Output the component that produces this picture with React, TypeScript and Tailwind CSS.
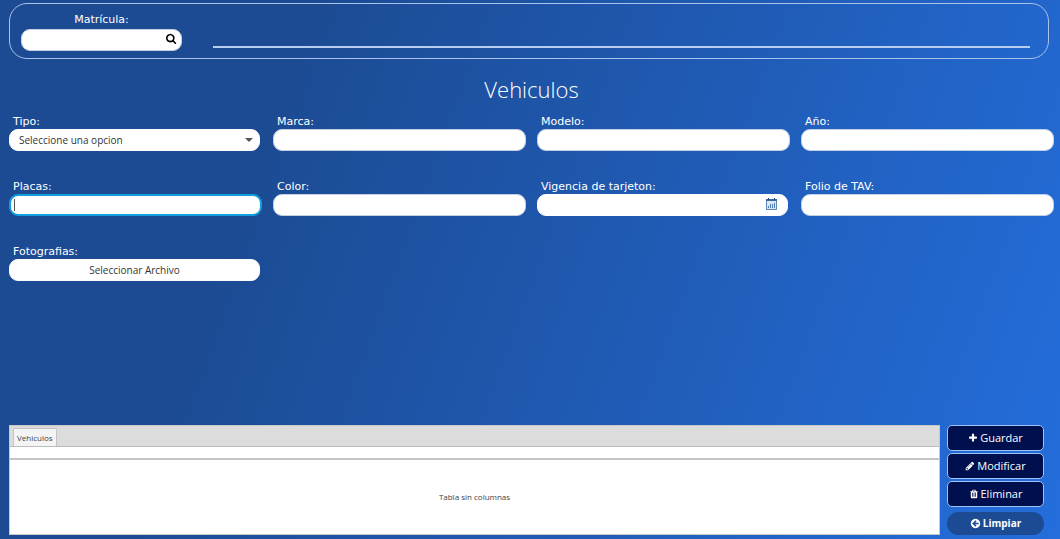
import React from "react";

const ICONS = {
  search:
    "M1152 832q0-185-131.5-316.5t-316.5-131.5-316.5 131.5-131.5 316.5 131.5 316.5 316.5 131.5 316.5-131.5 131.5-316.5zm512 832q0 52-38 90t-90 38q-54 0-90-38l-343-342q-179 124-399 124-143 0-273.5-55.5t-225-150-150-225-55.5-273.5 55.5-273.5 150-225 225-150 273.5-55.5 273.5 55.5 225 150 150 225 55.5 273.5q0 220-124 399l343 343q37 37 37 90z",
  plus: "M1600 736v192q0 40-28 68t-68 28h-416v416q0 40-28 68t-68 28h-192q-40 0-68-28t-28-68v-416h-416q-40 0-68-28t-28-68v-192q0-40 28-68t68-28h416v-416q0-40 28-68t68-28h192q40 0 68 28t28 68v416h416q40 0 68 28t28 68z",
  pencil:
    "M491 1536l91-91-235-235-91 91v107h128v128h107zm523-928q0-22-22-22-10 0-17 7l-542 542q-7 7-7 17 0 22 22 22 10 0 17-7l542-542q7-7 7-17zm-54-192l416 416-832 832h-416v-416zm683 96q0 53-37 90l-166 166-416-416 166-165q36-38 90-38 53 0 91 38l235 234q37 39 37 91z",
  trash:
    "M704 1376v-704q0-14-9-23t-23-9h-64q-14 0-23 9t-9 23v704q0 14 9 23t23 9h64q14 0 23-9t9-23zm256 0v-704q0-14-9-23t-23-9h-64q-14 0-23 9t-9 23v704q0 14 9 23t23 9h64q14 0 23-9t9-23zm256 0v-704q0-14-9-23t-23-9h-64q-14 0-23 9t-9 23v704q0 14 9 23t23 9h64q14 0 23-9t9-23zm-544-992h448l-48-117q-7-9-17-11h-317q-10 2-17 11zm928 32v64q0 14-9 23t-23 9h-96v948q0 83-47 143.5t-113 60.5h-832q-66 0-113-58.5t-47-141.5v-952h-96q-14 0-23-9t-9-23v-64q0-14 9-23t23-9h309l70-167q15-37 54-63t79-26h320q40 0 79 26t54 63l70 167h309q14 0 23 9t9 23z",
  back: "M1408 960v-128q0-26-19-45t-45-19h-502l189-189q19-19 19-45t-19-45l-91-91q-18-18-45-18t-45 18l-362 362-91 91q-18 18-18 45t18 45l91 91 362 362q18 18 45 18t45-18l91-91q18-18 18-45t-18-45l-189-189h502q26 0 45-19t19-45zm256-64q0 209-103 385.5t-279.5 279.5-385.5 103-385.5-103-279.5-279.5-103-385.5 103-385.5 279.5-279.5 385.5-103 385.5 103 279.5 279.5 103 385.5z",
};

function Icon({ name, className }: { name: keyof typeof ICONS; className: string }) {
  return (
    <svg viewBox="0 0 1792 1792" className={className} fill="currentColor" aria-hidden="true">
      <path d={ICONS[name]} />
    </svg>
  );
}

function CalendarIcon() {
  return (
    <svg viewBox="0 0 11 12" className="h-3 w-[11px]" fill="none" aria-hidden="true">
      <path d="M0 1h11v11H0z" fill="#dbe6f1" />
      <path d="M0 1h11v2H0z" fill="#3a6ba5" />
      <path d="M2.500 0v2M8.500 0v2" stroke="#24507f" />
      <path d="M.5 3v8.500h10V3" stroke="#5c87b6" />
      <path d="M2.500 10V8M4.500 10V6M6.500 10V6M8.500 10V5" stroke="#4f7fb3" />
    </svg>
  );
}

const control = "block h-[22px] w-full rounded-[9px] border bg-white px-1.5 text-[10px] text-[#333] outline-none";

function Field({ id, label, children }: { id: string; label: string; children: React.ReactNode }) {
  return (
    <div>
      <label
        htmlFor={id}
        className="block pl-1 font-['DejaVu_Sans',sans-serif] text-[11px] leading-[15px] text-white"
      >
        {label}
      </label>
      {children}
    </div>
  );
}

function TextField({ id, label, focused }: { id: string; label: string; focused?: boolean }) {
  return (
    <Field id={id} label={label}>
      <div className="relative">
        <input
          id={id}
          type="text"
          autoFocus={focused}
          className={`${control} border-[#c3cfe3] caret-transparent focus:border-2 focus:border-[#0f9fdb] focus:px-1`}
        />
        {focused && (
          <span className="pointer-events-none absolute top-[5px] left-[5px] h-3 w-px bg-[#555]" aria-hidden="true" />
        )}
      </div>
    </Field>
  );
}

function ActionButton({ icon, label }: { icon: keyof typeof ICONS; label: string }) {
  return (
    <button
      type="button"
      className="flex h-[26px] items-center justify-center gap-0.5 rounded-[5px] border border-[#9fc0f5] bg-[#00104f] text-[11px] text-white"
    >
      <Icon name={icon} className="size-2.5" />
      {label}
    </button>
  );
}

export default function App() {
  return (
    <main className="flex min-h-screen flex-col bg-[linear-gradient(110deg,#1c4b93_25%,#246edc)] pt-[3px] pb-1 pl-[9px] font-['Open_Sans',sans-serif]">
      <header className="mr-[11px] flex h-14 items-end gap-[31px] rounded-[18px] border border-[#a9c3ec] pr-[18px] pb-[7px] pl-[11px]">
        <div className="w-[161px]">
          <label
            htmlFor="matricula"
            className="mb-0.5 block text-center font-['DejaVu_Sans',sans-serif] text-[11px] leading-[15px] text-white"
          >
            Matrícula:
          </label>
          <div className="relative">
            <input id="matricula" type="text" className={`${control} border-[#c3cfe3] pr-6`} />
            <button type="button" aria-label="Buscar" className="absolute top-1 right-[5px] text-black">
              <Icon name="search" className="size-[11px]" />
            </button>
          </div>
        </div>
        <div className="mb-[3px] h-0.5 flex-1 bg-[#b9cdf0]" />
      </header>

      <h1 className="pt-3.5 pr-1.5 text-center text-[22px] leading-8 font-light text-white">Vehiculos</h1>

      <form className="grid grid-cols-4 gap-x-[11px] gap-y-7 pt-[9px] pr-1.5">
        <Field id="tipo" label="Tipo:">
          <div className="relative mr-0.5">
            <select id="tipo" className={`${control} appearance-none border-white pl-[9px]`}>
              <option>Seleccione una opcion</option>
            </select>
            <svg
              viewBox="0 0 8 4"
              className="pointer-events-none absolute top-[9px] right-[7px] h-1 w-2"
              fill="#555"
              aria-hidden="true"
            >
              <path d="M0 0h8L4 4z" />
            </svg>
          </div>
        </Field>
        <TextField id="marca" label="Marca:" />
        <TextField id="modelo" label="Modelo:" />
        <TextField id="anio" label="Año:" />

        <TextField id="placas" label="Placas:" focused />
        <TextField id="color" label="Color:" />
        <Field id="vigencia" label="Vigencia de tarjeton:">
          <div className="relative mr-0.5">
            <input id="vigencia" type="text" className={`${control} border-white pr-7`} />
            <button type="button" aria-label="Abrir calendario" className="absolute top-1 right-[11px]">
              <CalendarIcon />
            </button>
          </div>
        </Field>
        <TextField id="folio" label="Folio de TAV:" />

        <Field id="fotografias" label="Fotografias:">
          <div className="mr-0.5">
            <button id="fotografias" type="button" className={`${control} border-white`}>
              Seleccionar Archivo
            </button>
          </div>
        </Field>
      </form>

      <section className="mt-auto flex gap-[7px] pr-4">
        <div className="flex h-[110px] flex-1 flex-col border border-[#c8c8c8] bg-white">
          <div role="tablist" className="flex h-[21px] items-end border-b border-[#bdbdbd] bg-[#dcdcdc] pl-[3px]">
            <button
              type="button"
              role="tab"
              aria-selected="true"
              className="h-[18px] rounded-t-[2px] border border-b-0 border-[#c4c4c4] bg-[#f4f4f4] px-[3px] text-[8px] text-[#444]"
            >
              Vehiculos
            </button>
          </div>
          <table className="w-full flex-1 text-[8px] text-[#444]" aria-label="Vehiculos">
            <thead>
              <tr>
                <th className="h-3 border-b-2 border-[#c4c4c4] p-0" />
              </tr>
            </thead>
            <tbody>
              <tr>
                <td className="h-[74px] p-0 text-center">Tabla sin columnas</td>
              </tr>
            </tbody>
          </table>
        </div>
        <div className="flex w-[97px] flex-col gap-0.5">
          <ActionButton icon="plus" label="Guardar" />
          <ActionButton icon="pencil" label="Modificar" />
          <ActionButton icon="trash" label="Eliminar" />
          <button
            type="button"
            className="mt-[3px] flex h-[23px] items-center justify-center gap-0.5 rounded-full bg-[#1c4b93] text-[10px] font-bold text-white"
          >
            <Icon name="back" className="size-[11px]" />
            Limpiar
          </button>
        </div>
      </section>
    </main>
  );
}
